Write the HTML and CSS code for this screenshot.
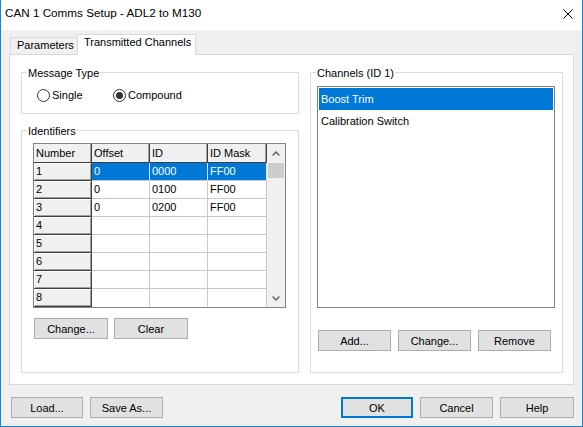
FILE: index.html
```html
<!DOCTYPE html>
<html>
<head>
<meta charset="utf-8">
<link rel="stylesheet" href="styles.css">
</head>
<body>
<div class="window">
  <div class="titlebar">
    <span class="title">CAN 1 Comms Setup - ADL2 to M130</span>
    <svg class="close" width="10" height="10" viewBox="0 0 10 10"><path d="M0.5 0.5L9.5 9.5M9.5 0.5L0.5 9.5" stroke="#000" stroke-width="1" fill="none"/></svg>
  </div>
  <div class="client">
    <div class="tabs">
      <div class="tab tab-params">Parameters</div>
      <div class="tab tab-active">Transmitted Channels</div>
    </div>
    <div class="panel">
      <div class="col-left">
        <fieldset class="group msgtype">
          <legend>Message Type</legend>
          <div class="radios">
            <label class="radio first"><span class="dot"></span>Single</label>
            <label class="radio on"><span class="dot"></span>Compound</label>
          </div>
        </fieldset>
        <fieldset class="group ids">
          <legend>Identifiers</legend>
          <div class="ids-inner">
            <div class="grid">
              <div class="cells">
                <div class="c h">Number</div><div class="c h">Offset</div><div class="c h">ID</div><div class="c h">ID Mask</div>
                <div class="c rh">1</div><div class="c sel">0</div><div class="c sel">0000</div><div class="c sel">FF00</div>
                <div class="c rh">2</div><div class="c">0</div><div class="c">0100</div><div class="c">FF00</div>
                <div class="c rh">3</div><div class="c">0</div><div class="c">0200</div><div class="c">FF00</div>
                <div class="c rh">4</div><div class="c"></div><div class="c"></div><div class="c"></div>
                <div class="c rh">5</div><div class="c"></div><div class="c"></div><div class="c"></div>
                <div class="c rh">6</div><div class="c"></div><div class="c"></div><div class="c"></div>
                <div class="c rh">7</div><div class="c"></div><div class="c"></div><div class="c"></div>
                <div class="c rh last">8</div><div class="c last"></div><div class="c last"></div><div class="c last"></div>
              </div>
              <div class="vscroll">
                <div class="sb-btn sb-up"><svg width="8" height="5" viewBox="0 0 8 5"><path d="M0.6 4.4L4 1L7.4 4.4" fill="none" stroke="#606060" stroke-width="1.4"/></svg></div>
                <div class="thumb"></div>
                <div class="track"></div>
                <div class="sb-btn"><svg width="8" height="5" viewBox="0 0 8 5"><path d="M0.6 0.6L4 4L7.4 0.6" fill="none" stroke="#606060" stroke-width="1.4"/></svg></div>
              </div>
            </div>
            <div class="btnrow grid-btns">
              <button class="btn">Change...</button>
              <button class="btn">Clear</button>
            </div>
          </div>
        </fieldset>
      </div>
      <fieldset class="group channels">
        <legend>Channels (ID 1)</legend>
        <div class="ch-inner">
          <div class="listbox">
            <div class="item sel">Boost Trim</div>
            <div class="item">Calibration Switch</div>
          </div>
          <div class="btnrow ch-btns">
            <button class="btn">Add...</button>
            <button class="btn">Change...</button>
            <button class="btn">Remove</button>
          </div>
        </div>
      </fieldset>
    </div>
    <div class="footer">
      <div class="grp">
        <button class="btn w72">Load...</button>
        <button class="btn">Save As...</button>
      </div>
      <div class="grp">
        <button class="btn w72 default">OK</button>
        <button class="btn">Cancel</button>
        <button class="btn w74">Help</button>
      </div>
    </div>
  </div>
</div>
</body>
</html>
```

FILE: styles.css
```css
* { box-sizing: border-box; }
html, body { margin: 0; padding: 0; }
body {
  width: 583px;
  height: 427px;
  overflow: hidden;
  font-family: "Liberation Sans", Arial, sans-serif;
  font-size: 11px;
  color: #000;
  background: #fff;
}
.window {
  width: 583px;
  height: 427px;
  border: 1px solid #1883d7;
  border-top: none;
  display: flex;
  flex-direction: column;
  background: #f0f0f0;
}
.titlebar {
  height: 30px;
  flex-shrink: 0;
  background: #fff;
  display: flex;
  align-items: flex-start;
  justify-content: space-between;
  padding: 0 9px 0 4px;
}
.title {
  font-size: 11.7px;
  line-height: 14px;
  margin-top: 6px;
}
.close { margin-top: 9px; }
.client {
  flex: 1;
  display: flex;
  flex-direction: column;
  padding: 4px 8px 0 8px;
}
.tabs {
  display: flex;
  align-items: flex-end;
  height: 20px;
  padding-left: 1px;
}
.tab {
  border: 1px solid #d9d9d9;
  border-bottom: none;
  line-height: 15px;
  padding-left: 6px;
  white-space: nowrap;
}
.tab-params {
  width: 67px;
  height: 17px;
  border-right: none;
  background: #f0f0f0;
}
.tab-active {
  width: 119px;
  height: 21px;
  margin-bottom: -1px;
  background: #fff;
  position: relative;
  z-index: 1;
}
.panel {
  height: 331px;
  border: 1px solid #d9d9d9;
  background: #fff;
  display: flex;
  gap: 11px;
  padding: 9px 10px 11px 11px;
}
.col-left {
  width: 278px;
  display: flex;
  flex-direction: column;
}
fieldset.group {
  margin: 0;
  padding: 0;
  min-width: 0;
  border: 1px solid #dcdcdc;
}
legend {
  margin-left: 5px;
  padding: 2px 1px 0 1px;
  line-height: 14px;
}
.radios {
  display: flex;
  padding: 8px 0 10px 15px;
}
.radio {
  display: flex;
  align-items: center;
  line-height: 15px;
}
.radio.first { width: 76px; }
.dot {
  width: 13px;
  height: 13px;
  border: 1px solid #333;
  border-radius: 50%;
  background: #fff;
  margin-right: 2px;
  display: flex;
  align-items: center;
  justify-content: center;
}
.radio.on .dot::after {
  content: "";
  width: 7px;
  height: 7px;
  border-radius: 50%;
  background: #333;
}
fieldset.ids {
  flex: 1;
  margin-top: 8px;
}
.ids-inner {
  padding: 5px 0 0 11px;
}
.grid {
  width: 253px;
  height: 165px;
  border: 1px solid #828282;
  display: flex;
}
.cells {
  display: grid;
  grid-template-columns: 58px 58px 58px 59px;
  grid-template-rows: 19px repeat(8, 18px);
}
.c {
  border-right: 1px solid #c8c8c8;
  border-bottom: 1px solid #c8c8c8;
  padding-left: 2px;
  line-height: 17px;
  white-space: nowrap;
  overflow: hidden;
  background: #fff;
}
.c.h {
  background: #f0f0f0;
  border-right: 1px solid #404040;
  border-bottom: 1px solid #404040;
  box-shadow: inset -1px 0 #a0a0a0;
  line-height: 18px;
}
.c.rh {
  background: #f0f0f0;
  border-right: 1px solid #404040;
  border-bottom: 1px solid #404040;
  box-shadow: inset 1px 1px #fff, inset -1px -1px #a0a0a0;
}
.c.sel {
  background: #0078d7;
  color: #fff;
  border-right-color: #d8e8f6;
}
.c.last { border-bottom-color: transparent; }
.c.rh.last { border-bottom-color: #404040; }
.vscroll {
  width: 18px;
  background: #f0f0f0;
  display: flex;
  flex-direction: column;
}
.sb-btn {
  height: 18px;
  display: flex;
  align-items: center;
  justify-content: center;
}
.sb-up { height: 19px; }
.thumb {
  height: 15px;
  margin: 0 1px;
  background: #cdcdcd;
}
.track { flex: 1; }
.btnrow { display: flex; }
.grid-btns {
  gap: 6px;
  margin-top: 10px;
  padding-left: 1px;
}
.grid-btns .btn { width: 74px; }
.btn {
  width: 73px;
  height: 21px;
  margin: 0;
  padding: 0;
  font-family: inherit;
  font-size: 11px;
  color: #000;
  background: #e1e1e1;
  border: 1px solid #adadad;
  display: flex;
  align-items: center;
  justify-content: center;
}
.btn.w72 { width: 72px; }
.btn.w74 { width: 74px; }
.btn.default {
  border-color: #0078d7;
  box-shadow: inset 0 0 0 1px #0078d7;
}
fieldset.channels {
  flex: 1;
}
.ch-inner {
  padding: 6px 7px 0 6px;
}
.listbox {
  height: 222px;
  border: 1px solid #828282;
  padding: 1px;
  background: #fff;
}
.item {
  height: 22px;
  line-height: 22px;
  padding-left: 2px;
}
.item.sel {
  background: #0078d7;
  color: #fff;
}
.ch-btns {
  gap: 7px;
  margin-top: 22px;
  padding-left: 1px;
}
.footer {
  display: flex;
  justify-content: space-between;
  margin-top: 12px;
  padding-left: 2px;
}
.footer .grp {
  display: flex;
  gap: 7px;
}
```
